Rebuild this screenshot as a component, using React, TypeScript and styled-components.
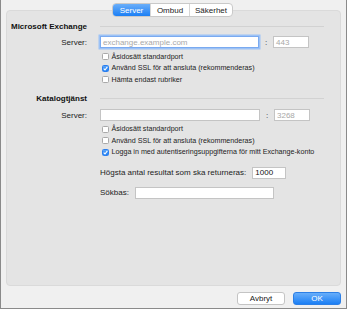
import React from "react";
import styled, { createGlobalStyle, css } from "styled-components";

const GlobalStyle = createGlobalStyle`
  html, body {
    margin: 0;
    padding: 0;
    background: #f0f0f0;
  }
  * {
    box-sizing: border-box;
  }
`;

const Window = styled.div`
  width: 347px;
  height: 309px;
  background: #f0f0f0;
  border: 1px solid #8a8a8a;
  border-top: none;
  padding: 3px 5px 0 5px;
  font-family: "Liberation Sans", Arial, sans-serif;
  font-size: 8px;
  color: #1c1c1c;
  display: flex;
  flex-direction: column;
`;

const TabBar = styled.div`
  position: relative;
  z-index: 2;
  align-self: center;
  display: flex;
  height: 14px;
  margin-left: -2px;
  background: #fff;
  border: 1px solid #c9c9c9;
  border-radius: 4px;
  overflow: hidden;
`;

const Tab = styled.div<{ $active?: boolean; $w: number }>`
  width: ${(p) => p.$w}px;
  display: flex;
  align-items: center;
  justify-content: center;
  font-size: 8px;
  color: #222;
  & + & {
    border-left: 1px solid #d6d6d6;
  }
  ${(p) =>
    p.$active &&
    css`
      background: linear-gradient(#6aaef9, #1b7ff5);
      color: #fff;
    `}
`;

const Panel = styled.div`
  margin-top: -7px;
  height: 276px;
  background: #e4e4e4;
  border: 1px solid #dadada;
  border-radius: 4px;
  padding: 9px 16px 0 0;
  display: flex;
  flex-direction: column;
`;

const Grid = styled.div<{ $top?: number; $h?: number }>`
  display: grid;
  grid-template-columns: 80px 1fr;
  column-gap: 13px;
  align-items: center;
  margin-top: ${(p) => p.$top ?? 0}px;
  height: ${(p) => p.$h ?? 12}px;
`;

const Heading = styled.div`
  text-align: right;
  font-weight: bold;
  font-size: 8px;
  color: #111;
  white-space: nowrap;
`;

const Rule = styled.div`
  height: 1px;
  background: #d2d2d2;
`;

const Label = styled.div`
  text-align: right;
  font-size: 8px;
  white-space: nowrap;
`;

const FieldRow = styled.div`
  display: flex;
  align-items: center;
`;

const Input = styled.div<{ $w: number; $focus?: boolean; $muted?: boolean }>`
  width: ${(p) => p.$w}px;
  height: 12px;
  background: #fff;
  border: 1px solid #c4c4c4;
  display: flex;
  align-items: center;
  padding-left: 2px;
  font-size: 8px;
  white-space: nowrap;
  color: ${(p) => (p.$muted ? "#a8a8a8" : "#111")};
  ${(p) =>
    p.$focus &&
    css`
      border-color: #7aaaf0;
      box-shadow: 0 0 0 1.5px #9cc2f6;
    `}
`;

const Colon = styled.div`
  width: 14px;
  text-align: center;
  font-size: 8px;
  color: #333;
`;

const Checks = styled.div<{ $top: number }>`
  margin-left: 93px;
  margin-top: ${(p) => p.$top}px;
  display: flex;
  flex-direction: column;
`;

const CheckRow = styled.div`
  height: 11.5px;
  display: flex;
  align-items: center;
  gap: 3px;
  font-size: 7.15px;
  white-space: nowrap;
  color: #1c1c1c;
`;

const Box = styled.span<{ $on?: boolean }>`
  width: 7px;
  height: 7px;
  border-radius: 1.5px;
  border: 1px solid ${(p) => (p.$on ? "#2a7ef0" : "#a9a9a9")};
  background: ${(p) => (p.$on ? "linear-gradient(#5aa4f8, #1f7ff2)" : "#fff")};
  display: flex;
  align-items: center;
  justify-content: center;
  margin-left: 1.5px;
`;

const Line = styled.div<{ $top: number }>`
  margin-left: 93px;
  margin-top: ${(p) => p.$top}px;
  display: flex;
  align-items: center;
  height: 12px;
  gap: 6px;
  font-size: 8px;
  white-space: nowrap;
`;

const Footer = styled.div`
  margin-top: 6px;
  height: 13px;
  display: flex;
  justify-content: flex-end;
  gap: 8px;
`;

const Button = styled.div<{ $primary?: boolean }>`
  width: 48px;
  height: 13px;
  border-radius: 3px;
  display: flex;
  align-items: center;
  justify-content: center;
  font-size: 8px;
  ${(p) =>
    p.$primary
      ? css`
          background: linear-gradient(#68aefa, #1b7ff5);
          border: 1px solid #2c7fe6;
          color: #fff;
        `
      : css`
          background: #fff;
          border: 1px solid #c4c4c4;
          color: #222;
        `}
`;

const Check = ({ on, children }: { on?: boolean; children: React.ReactNode }) => (
  <CheckRow>
    <Box $on={on}>
      {on && (
        <svg width="5" height="5" viewBox="0 0 6 6">
          <path d="M0.8 3.2 L2.4 4.8 L5.2 1" fill="none" stroke="#fff" strokeWidth="1.3" />
        </svg>
      )}
    </Box>
    {children}
  </CheckRow>
);

export default function App() {
  return (
    <>
      <GlobalStyle />
      <Window>
        <TabBar>
          <Tab $active $w={37}>Server</Tab>
          <Tab $w={39}>Ombud</Tab>
          <Tab $w={43}>Säkerhet</Tab>
        </TabBar>
        <Panel>
          <Grid>
            <Heading>Microsoft Exchange</Heading>
            <Rule />
          </Grid>
          <Grid $top={4}>
            <Label>Server:</Label>
            <FieldRow>
              <Input $w={159} $focus $muted>exchange.example.com</Input>
              <Colon>:</Colon>
              <Input $w={36} $muted>443</Input>
            </FieldRow>
          </Grid>
          <Checks $top={3}>
            <Check>Åsidosätt standardport</Check>
            <Check on>Använd SSL för att ansluta (rekommenderas)</Check>
            <Check>Hämta endast rubriker</Check>
          </Checks>
          <Grid $top={6.5}>
            <Heading>Katalogtjänst</Heading>
            <Rule />
          </Grid>
          <Grid $top={5}>
            <Label>Server:</Label>
            <FieldRow>
              <Input $w={160} />
              <Colon>:</Colon>
              <Input $w={36} $muted>3268</Input>
            </FieldRow>
          </Grid>
          <Checks $top={2.5}>
            <Check>Åsidosätt standardport</Check>
            <Check>Använd SSL för att ansluta (rekommenderas)</Check>
            <Check on>Logga in med autentiseringsuppgifterna för mitt Exchange-konto</Check>
          </Checks>
          <Line $top={8.5}>
            Högsta antal resultat som ska returneras:
            <Input $w={34}>1000</Input>
          </Line>
          <Line $top={8}>
            Sökbas:
            <Input $w={139} />
          </Line>
        </Panel>
        <Footer>
          <Button>Avbryt</Button>
          <Button $primary>OK</Button>
        </Footer>
      </Window>
    </>
  );
}
